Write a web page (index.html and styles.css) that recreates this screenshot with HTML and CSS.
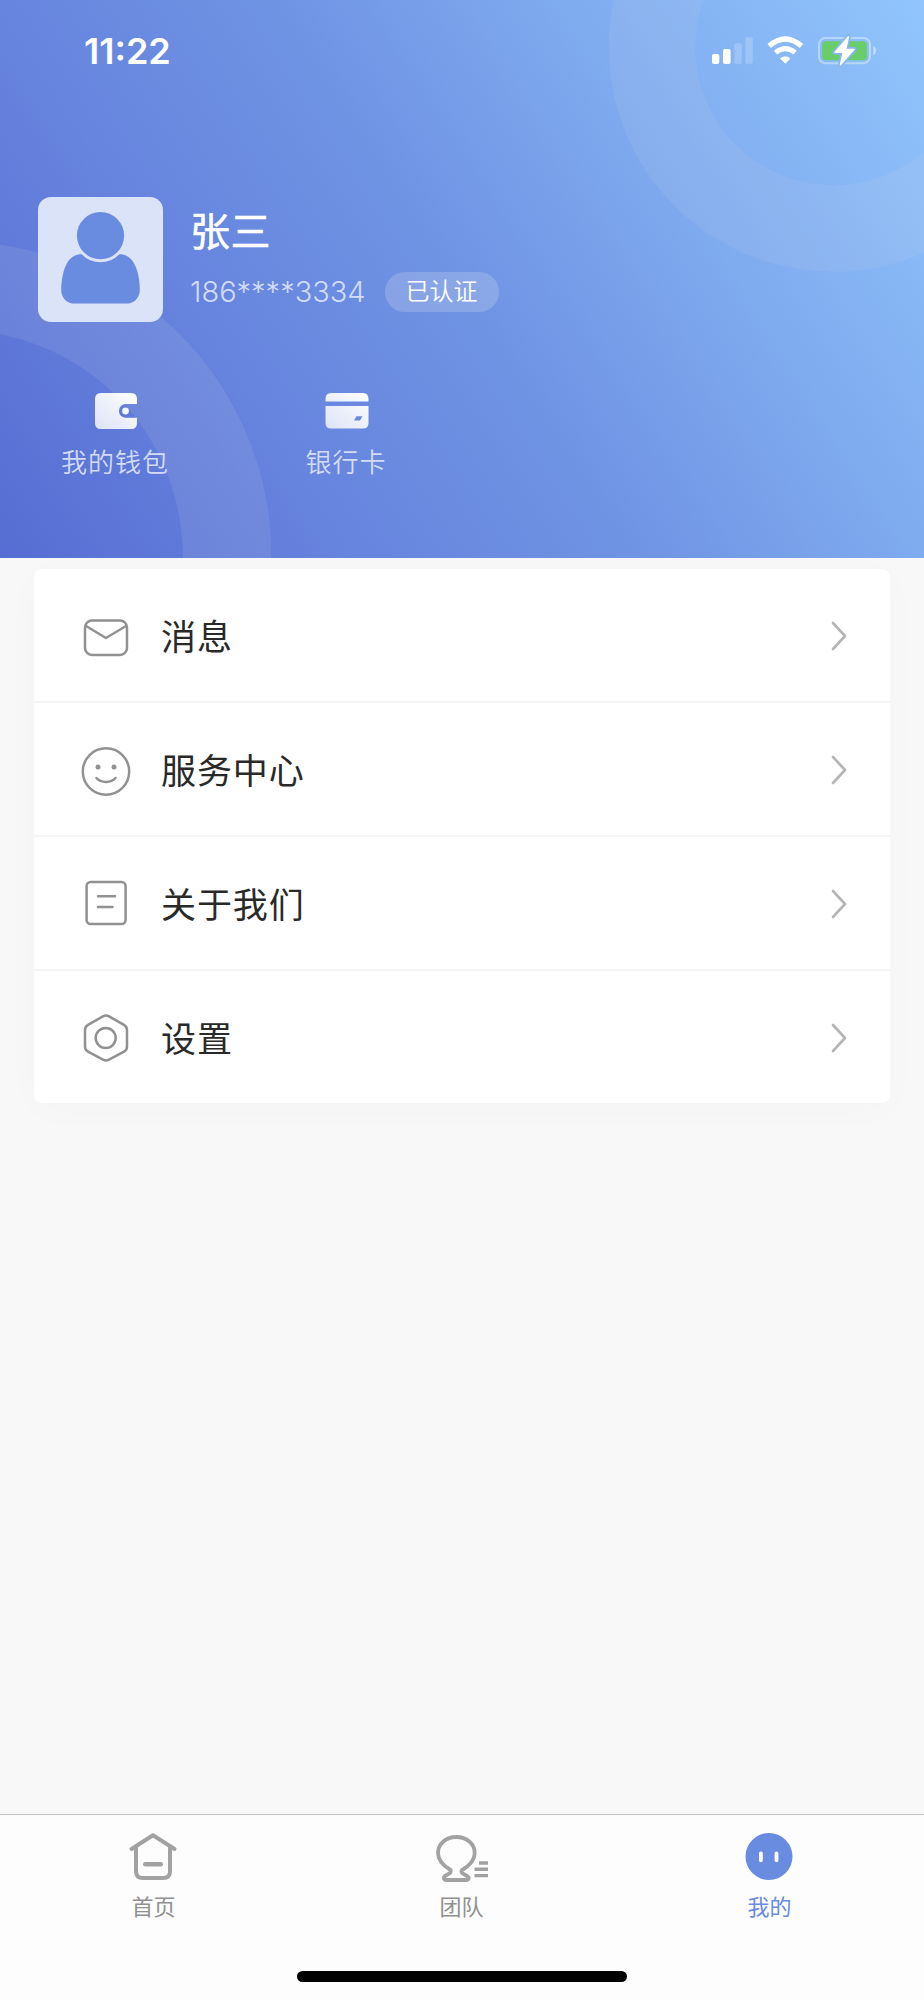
FILE: index.html
```html
<!DOCTYPE html>
<html lang="zh-CN">
<head>
<meta charset="utf-8">
<title>我的</title>
<link rel="stylesheet" href="styles.css">
</head>
<body>
<div class="screen">
  <header class="hero">
    <svg class="rings" width="924" height="558" viewBox="0 0 924 558" fill="none">
      <circle cx="833.5" cy="47" r="181.5" stroke="#c8d2e6" stroke-opacity=".13" stroke-width="86.5"/>
      <circle cx="-43" cy="556" r="270" stroke="#c8d2e6" stroke-opacity=".13" stroke-width="88.5"/>
    </svg>
    <div class="status">
      <span class="time">11:22</span>
      <svg class="signals" width="170" height="34" viewBox="0 0 170 34">
        <g fill="#fff">
          <rect x="2" y="20" width="7.3" height="10" rx="2"/>
          <rect x="13" y="15" width="7.6" height="15" rx="2"/>
          <rect x="24.3" y="9.3" width="7.5" height="20.7" rx="2" opacity=".2"/>
          <rect x="35.3" y="3.3" width="7.5" height="26.7" rx="2" opacity=".2"/>
          <path d="M75.3 29.200L70.500 24.500Q75.300 21 80.100 24.500Z" stroke="#fff" stroke-width=".8" stroke-linejoin="round"/>
        </g>
        <path d="M65.5 18.600Q75.3 10.600 85.1 18.600" fill="none" stroke="#fff" stroke-width="5"/>
        <path d="M59.2 12Q75.3 -2 91.4 12" fill="none" stroke="#fff" stroke-width="5.2"/>
        <rect x="109" y="4" width="51" height="25.2" rx="6.5" fill="none" stroke="#fff" stroke-opacity=".38" stroke-width="2"/>
        <rect x="112" y="7.2" width="45" height="19" rx="3.8" fill="#69ce69"/>
        <path d="M163.4 12.2c3.4 1 3.4 8 0 9z" fill="#fff" fill-opacity=".5"/>
        <path d="M138.5 2.8L125 18.3h8.2L130.3 31l13.7-15.7h-8.2z" fill="#fff" stroke="#86b6f2" stroke-width="5" stroke-linejoin="round"/>
        <path d="M138.5 2.8L125 18.3h8.2L130.3 31l13.7-15.7h-8.2z" fill="#fff" stroke="#fff" stroke-width="1.3" stroke-linejoin="round"/>
      </svg>
    </div>
    <section class="profile">
      <svg class="avatar" width="125" height="125" viewBox="0 0 125 125">
        <rect width="125" height="125" rx="13" fill="#dbe3f8"/>
        <circle cx="62.5" cy="38.6" r="23.6" fill="#698be0"/>
        <path d="M43.8 57.3C48.5 62.500 55.5 65.3 62.5 65.3S76.500 62.500 81.200 57.300C90.500 57 96.500 64 99.500 75C101.500 82.500 102 89.500 101.700 95C100.500 102 95.500 106.600 88.500 106.600H36.500C29.500 106.600 24.500 102 23.300 95C23 89.500 23.500 82.500 25.500 75C28.500 64 34.500 57 43.800 57.300Z" fill="#698be0"/>
      </svg>
      <div class="identity">
        <div class="name">张三</div>
        <div class="contact"><span class="phone">186****3334</span><span class="badge">已认证</span></div>
      </div>
    </section>
    <nav class="shortcuts">
      <a class="shortcut">
        <svg width="44" height="38" viewBox="0 0 44 38">
          <defs><linearGradient id="sheen" x1="0" y1="1" x2="1" y2="0"><stop stop-color="#dde3f7"/><stop offset="1" stop-color="#fff"/></linearGradient></defs>
          <path d="M7 1H37Q43 1 43 7V12H31.800A6.900 6.900 0 0 0 31.800 25.800H43V31Q43 37 37 37H7Q1 37 1 31V7Q1 1 7 1Z" fill="url(#sheen)"/>
          <circle cx="31.500" cy="19" r="3.400" fill="#f4f6fd"/>
        </svg>
        <span>我的钱包</span>
      </a>
      <a class="shortcut">
        <svg width="44" height="38" viewBox="0 0 44 38">
          <path fill-rule="evenodd" d="M.5 9.500V7Q.5 1 6 1H38Q43.500 1 43.500 7V9.500ZM.5 14H43.500V31Q43.500 36.500 38 36.500H6Q.5 36.500 .5 31ZM29 28.600H35L37.500 24.300H31.500Z" fill="url(#sheen)"/>
        </svg>
        <span>银行卡</span>
      </a>
    </nav>
  </header>
  <main class="card">
    <a class="row">
      <svg class="icon" width="50" height="50" viewBox="0 0 50 50"><rect x="4" y="8.500" width="42" height="34.500" rx="7"/><path d="M5 14L25 26L45 14"/></svg>
      <span class="label">消息</span>
      <svg class="arrow" width="16" height="30" viewBox="0 0 16 30"><path d="M2 2L14 15L2 28"/></svg>
    </a>
    <a class="row">
      <svg class="icon" width="50" height="50" viewBox="0 0 50 50"><circle cx="25" cy="25.500" r="23.200"/><circle class="dot" cx="17" cy="21" r="2.500"/><circle class="dot" cx="33" cy="21" r="2.500"/><path d="M15.500 32C20 37.200 30 37.200 34.500 32"/></svg>
      <span class="label">服务中心</span>
      <svg class="arrow" width="16" height="30" viewBox="0 0 16 30"><path d="M2 2L14 15L2 28"/></svg>
    </a>
    <a class="row">
      <svg class="icon" width="50" height="50" viewBox="0 0 50 50"><rect x="5.600" y="2" width="39" height="42" rx="4"/><path d="M17 16.200H34M17 27H31.500"/></svg>
      <span class="label">关于我们</span>
      <svg class="arrow" width="16" height="30" viewBox="0 0 16 30"><path d="M2 2L14 15L2 28"/></svg>
    </a>
    <a class="row">
      <svg class="icon" width="50" height="50" viewBox="0 0 50 50"><path d="M22 2.300Q25 .6 28 2.300L43 10.800Q46 12.500 46 16V32.500Q46 36 43 37.700L28 45.700Q25 47.300 22 45.700L7 37.700Q4 36 4 32.500V16Q4 12.500 7 10.800Z"/><circle cx="24.700" cy="24" r="10"/></svg>
      <span class="label">设置</span>
      <svg class="arrow" width="16" height="30" viewBox="0 0 16 30"><path d="M2 2L14 15L2 28"/></svg>
    </a>
  </main>
  <footer class="tabbar">
    <nav class="tabs">
      <a class="tab">
        <svg width="52" height="50" viewBox="0 0 52 50" fill="none" stroke="#a2a2a2" stroke-width="4" stroke-linecap="round" stroke-linejoin="round"><path d="M4.500 17L26 3.300L47.500 17M9 16V39.500Q9 46 16 46H36Q43 46 43 39.500V16"/><path d="M18.300 32.200H33.700" stroke-width="4.600"/></svg>
        <span>首页</span>
      </a>
      <a class="tab">
        <svg width="52" height="50" viewBox="0 0 52 50" fill="none" stroke="#a2a2a2" stroke-width="3.800" stroke-linejoin="round"><path d="M15.500 38Q17 40.500 12.500 42.500Q9 44 8.800 46Q9 48 12 48H31Q33.500 48 33.700 46Q33 44 29.500 42.500Q25 40.500 27 38C35 33.500 39.700 27.500 39.700 21C39.700 11.500 31.500 5 21.300 5S3 11.500 3 21C3 27.500 8 33.500 15.500 38Z"/><path d="M44 31H53M39.500 37.300H53M39.500 43.600H53" stroke-width="3.400"/></svg>
        <span>团队</span>
      </a>
      <a class="tab active">
        <svg width="52" height="50" viewBox="0 0 52 50"><circle cx="26" cy="24.500" r="23.500" fill="#698be0"/><path d="M17.900 21.300V28.300M33.500 21.300V28.300" stroke="#fff" stroke-width="3.800" stroke-linecap="round"/></svg>
        <span>我的</span>
      </a>
    </nav>
    <div class="home-indicator"></div>
  </footer>
</div>
</body>
</html>
```

FILE: styles.css
```css
* { box-sizing: border-box; }
body { margin: 0; font-family: Inter, "Noto Sans CJK SC", sans-serif; }
svg { display: block; flex: none; overflow: visible; }
.screen { width: 924px; height: 2000px; display: flex; flex-direction: column; background: #f8f8f8; overflow: hidden; }
.hero { position: relative; height: 558px; flex: none; overflow: hidden; color: #fff; background: linear-gradient(57deg, #566dd3 0%, #6784de 28%, #6f94e4 50%, #7fabef 72%, #91c5fc 100%); }
.rings { position: absolute; inset: 0; }
.status, .profile, .shortcuts { position: relative; display: flex; }
.status { height: 197px; padding: 34px 44px 0 84px; justify-content: space-between; align-items: flex-start; }
.time { font-size: 36px; line-height: 35px; font-weight: 600; }
.profile { padding-left: 38px; gap: 27px; height: 195px; }
.name { font-size: 40px; line-height: 50px; font-weight: 400; margin-top: 10px; letter-spacing: .5px; -webkit-text-stroke: .5px #fff; }
.contact { display: flex; align-items: center; gap: 20px; margin-top: 15px; }
.phone { font-size: 29px; line-height: 40px; font-weight: 350; letter-spacing: 0; color: #d3ddf7; width: 175px; white-space: nowrap; }
.badge { width: 114px; height: 40px; border-radius: 20px; background: rgba(200, 210, 235, .3); text-align: center; font-size: 24px; line-height: 40px; font-weight: 350; padding-right: 1px; }
.shortcut { width: 231px; display: flex; flex-direction: column; align-items: center; gap: 13px; font-size: 26px; line-height: 40px; font-weight: 350; letter-spacing: 1px; color: #d3dcf6; }
.shortcut span { margin-left: -1px; }
.card { width: 856px; height: 534px; margin: 11px 0 0 34px; border-radius: 8px; background: #fff; flex: none; box-shadow: 0 6px 40px rgba(0, 0, 0, .02); }
.row { height: 134px; display: flex; align-items: center; padding: 2px 43px 0 47px; border-bottom: 2px solid #f5f5f5; }
.row:last-child { border-bottom: 0; height: 132px; }
.icon { margin-top: 2px; fill: none; stroke: #919191; stroke-width: 2.5; stroke-linecap: round; stroke-linejoin: round; }
.icon .dot { fill: #919191; stroke: none; }
.label { flex: 1; margin: 2px 0 0 30px; font-size: 35px; line-height: 50px; letter-spacing: .9px; color: #292929; }
.arrow { fill: none; stroke: #b5b5b5; stroke-width: 2.6; stroke-linecap: round; stroke-linejoin: round; }
.tabbar { margin-top: auto; height: 186px; flex: none; background: #fdfdfd; border-top: 1px solid #c2c2c2; display: flex; flex-direction: column; align-items: center; }
.tabs { display: flex; width: 924px; height: 156px; padding-top: 17px; margin-left: -1px; }
.tab { width: 308px; display: flex; flex-direction: column; align-items: center; gap: 9px; font-size: 22px; line-height: 32px; color: #909090; }
.tab svg { margin-left: -1px; }
.tab.active { color: #698be0; }
.home-indicator { width: 330px; height: 11px; border-radius: 6px; background: #000; }
```
